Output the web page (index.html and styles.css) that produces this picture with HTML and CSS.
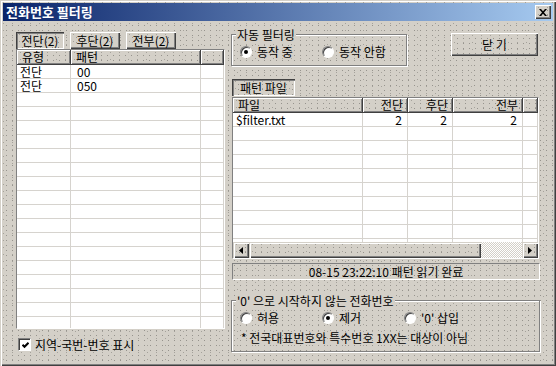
FILE: index.html
```html
<!DOCTYPE html>
<html>
<head>
    <meta charset="UTF-8">
    <title>전화번호 필터링</title>
    <link rel="stylesheet" href="styles.css">
</head>
<body>
    <div class="window face">
        <div class="titlebar">
            <span class="title">전화번호 필터링</span>
            <span class="title-close face raised">
                <svg width="8" height="7" viewBox="0 0 8 7"><path d="M0 0h2l2 2.2L6 0h2L5 3.5 8 7H6L4 4.8 2 7H0l3-3.5z" fill="#000"/></svg>
            </span>
        </div>

        <div class="content">
            <div class="left">
                <div class="tabs">
                    <span class="tab face tab-on">전단(2)</span>
                    <span class="tab face raised">후단(2)</span>
                    <span class="tab face raised">전부(2)</span>
                </div>

                <div class="listview list-left">
                    <div class="lv-head">
                        <span class="hcell face c-type">유형</span>
                        <span class="hcell face c-pattern">패턴</span>
                        <span class="hcell face c-fill"></span>
                    </div>
                    <div class="lv-body">
                        <div class="lv-col c-type">
                            <div class="cell first">전단</div>
                            <div class="cell first">전단</div>
                        </div>
                        <div class="lv-col c-pattern">
                            <div class="cell">00</div>
                            <div class="cell">050</div>
                        </div>
                        <div class="lv-col c-fill"></div>
                    </div>
                </div>

                <div class="check">
                    <span class="check-box">
                        <svg width="7" height="7" viewBox="0 0 7 7"><polyline points="0.5,2.8 2.5,4.8 6.5,0.8" fill="none" stroke="#000" stroke-width="2"/></svg>
                    </span>
                    지역-국번-번호 표시
                </div>
            </div>

            <div class="right">
                <div class="top-row">
                    <fieldset class="group group-auto">
                        <legend>자동 필터링</legend>
                        <div class="radios">
                            <span class="radio"><span class="radio-dot on"></span>동작 중</span>
                            <span class="radio"><span class="radio-dot"></span>동작 안함</span>
                        </div>
                    </fieldset>
                    <button class="btn face raised">닫 기</button>
                </div>

                <div class="tab face tab-on tab-file">패턴 파일</div>

                <div class="listview list-right">
                    <div class="lv-head">
                        <span class="hcell face c-file">파일</span>
                        <span class="hcell face c-num num">전단</span>
                        <span class="hcell face c-num num">후단</span>
                        <span class="hcell face c-all num">전부</span>
                        <span class="hcell face c-fill"></span>
                    </div>
                    <div class="lv-body">
                        <div class="lv-col c-file"><div class="cell first">$filter.txt</div></div>
                        <div class="lv-col c-num"><div class="cell num">2</div></div>
                        <div class="lv-col c-num"><div class="cell num">2</div></div>
                        <div class="lv-col c-all"><div class="cell num">2</div></div>
                        <div class="lv-col c-fill"></div>
                    </div>
                    <div class="hscroll">
                        <span class="sb-btn face">
                            <svg width="4" height="7" viewBox="0 0 4 7"><path d="M4 0v7L0 3.5z" fill="#000"/></svg>
                        </span>
                        <span class="sb-thumb face"></span>
                        <span class="sb-track"></span>
                        <span class="sb-btn face">
                            <svg width="4" height="7" viewBox="0 0 4 7"><path d="M0 0v7L4 3.5z" fill="#000"/></svg>
                        </span>
                    </div>
                </div>

                <div class="status">08-15 23:22:10 패턴 읽기 완료</div>

                <fieldset class="group group-zero">
                    <legend>'0' 으로 시작하지 않는 전화번호</legend>
                    <div class="radios">
                        <span class="radio"><span class="radio-dot"></span>허용</span>
                        <span class="radio"><span class="radio-dot on"></span>제거</span>
                        <span class="radio"><span class="radio-dot"></span>'0' 삽입</span>
                    </div>
                    <div class="note">* 전국대표번호와 특수번호 1XX는 대상이 아님</div>
                </fieldset>
            </div>
        </div>
    </div>
</body>
</html>
```

FILE: styles.css
```css
* {
    box-sizing: border-box;
}

body {
    margin: 0;
    font-family: "Noto Sans CJK KR", "Noto Sans", sans-serif;
    font-size: 12px;
    color: #000;
}

/* dialog face with the dotted texture */
.face {
    background-color: #d4d0c8;
    background-image:
        conic-gradient(at 1px 1px, transparent 75%, #96938d 0),
        conic-gradient(at 1px 1px, transparent 75%, #a5a29b 0);
    background-size: 6px 5px, 9px 7px;
    background-position: 0 0, 3px 2px;
}

.raised {
    box-shadow: inset 1px 1px #fff, inset -1px -1px #404040, inset -2px -2px #808080;
}

.window {
    width: 556px;
    height: 366px;
    padding: 3px;
    box-shadow: inset 1px 1px #d4d0c8, inset 2px 2px #fff, inset -1px -1px #404040, inset -2px -2px #808080;
}

.titlebar {
    height: 18px;
    display: flex;
    align-items: center;
    justify-content: space-between;
    padding: 0 2px 0 3px;
    background: linear-gradient(to right, #0a246a, #a6caf0);
}

.title {
    color: #fff;
    font-weight: bold;
    font-size: 13px;
    line-height: 18px;
}

.title-close {
    width: 16px;
    height: 14px;
    display: flex;
    align-items: center;
    justify-content: center;
}

.content {
    display: flex;
    gap: 6px;
    padding: 6px 13px 0;
}

.left {
    width: 209px;
    padding-top: 5px;
}

.tabs {
    display: flex;
    gap: 6px;
}

.tab {
    height: 17px;
    padding: 0 5px;
    line-height: 17px;
    text-align: center;
    white-space: nowrap;
}

.tabs .tab {
    width: 50px;
}

.tabs .tab:first-child {
    width: 48px;
}

.tab-on {
    box-shadow: inset 1px 1px #404040, inset 2px 2px #808080, inset -1px -1px #fff;
}

.listview {
    background: #fff;
    border: 1px solid;
    border-color: #808080 #fff #fff #808080;
    display: flex;
    flex-direction: column;
}

.list-left {
    height: 280px;
}

.lv-head {
    display: flex;
    height: 15px;
    flex: none;
}

.hcell {
    height: 15px;
    line-height: 14px;
    padding: 0 4px 0 5px;
    border-right: 1px solid #404040;
    border-bottom: 1px solid #404040;
    box-shadow: inset 1px 1px #fff, inset -1px -1px #808080;
    white-space: nowrap;
}

.lv-body {
    flex: 1;
    display: flex;
    background-image: repeating-linear-gradient(to bottom, transparent 0 13px, #d6d3ce 13px 14px);
}

.lv-col {
    border-right: 1px solid #d6d3ce;
}

.cell {
    height: 14px;
    line-height: 14px;
    padding: 0 6px;
    white-space: nowrap;
}

.cell.first {
    padding-left: 3px;
}

.num {
    text-align: right;
}

.cell.num {
    padding-right: 5px;
}

.c-type { width: 54px; }
.c-pattern { width: 130px; }
.c-file { width: 130px; }
.c-num { width: 45px; }
.c-all { width: 70px; }
.c-fill { flex: 1; }

.check {
    display: flex;
    align-items: center;
    gap: 4px;
    height: 13px;
    margin: 9px 0 0 2px;
    line-height: 13px;
}

.check-box {
    width: 13px;
    height: 13px;
    background: #fff;
    border: 1px solid;
    border-color: #808080 #fff #fff #808080;
    box-shadow: inset 1px 1px #404040;
    display: flex;
    align-items: center;
    justify-content: center;
    padding: 1px 0 0 1px;
}

.right {
    width: 309px;
}

.top-row {
    display: flex;
    justify-content: space-between;
    align-items: flex-start;
}

.group {
    margin: 0;
    padding: 0 0 7px 0;
    border: 1px solid #808080;
    box-shadow: inset 1px 1px #fff, 1px 1px #fff;
}

.group legend {
    margin-left: 4px;
    padding: 0 1px;
    line-height: 15px;
    background: #d4d0c8;
}

.group-auto {
    width: 176px;
}

.group-zero {
    width: 309px;
    margin-top: 13px;
}

.radios {
    display: flex;
    height: 12px;
    margin-top: 4px;
    padding-left: 8px;
}

.radio {
    display: flex;
    align-items: center;
    gap: 5px;
    width: 82px;
    line-height: 12px;
    white-space: nowrap;
}

.radio-dot {
    width: 12px;
    height: 12px;
    border-radius: 50%;
    background: #fff;
    border: 1px solid;
    border-color: #808080 #fff #fff #808080;
    box-shadow: inset 1px 1px #404040;
    display: flex;
    align-items: center;
    justify-content: center;
}

.radio-dot.on::after {
    content: "";
    width: 4px;
    height: 4px;
    border-radius: 50%;
    background: #000;
}

.note {
    margin-top: 8px;
    padding-left: 9px;
    height: 12px;
    line-height: 12px;
}

.btn {
    width: 87px;
    height: 23px;
    margin: 6px 2px 0 0;
    padding: 0;
    border: none;
    font: inherit;
    color: #000;
}

.tab-file {
    width: 63px;
    margin: 13px 0 0 1px;
}

.list-right {
    width: 307px;
    height: 162px;
    margin: 1px 0 0 1px;
}

.hscroll {
    display: flex;
    height: 16px;
    flex: none;
}

.sb-btn {
    width: 16px;
    display: flex;
    align-items: center;
    justify-content: center;
    box-shadow: inset 1px 1px #d4d0c8, inset 2px 2px #fff, inset -1px -1px #404040, inset -2px -2px #808080;
}

.sb-thumb {
    width: 232px;
    box-shadow: inset 1px 1px #d4d0c8, inset 2px 2px #fff, inset -1px -1px #404040, inset -2px -2px #808080;
}

.sb-track {
    flex: 1;
    background: conic-gradient(#fff 25%, #d4d0c8 0 50%, #fff 0 75%, #d4d0c8 0) 0 0 / 2px 2px;
}

.status {
    width: 308px;
    height: 17px;
    margin: 4px 0 0 1px;
    border: 1px solid;
    border-color: #808080 #fff #fff #808080;
    text-align: center;
    line-height: 15px;
}
```
